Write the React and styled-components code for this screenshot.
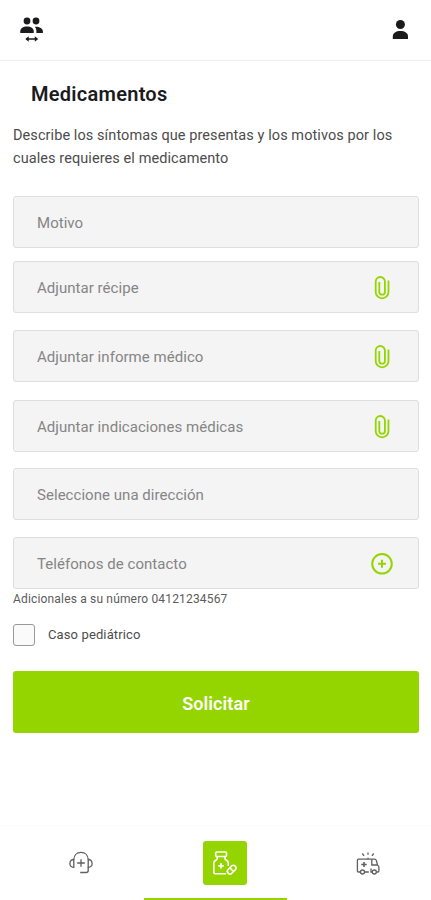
import React, { useState } from 'react';
import styled, { createGlobalStyle } from 'styled-components';

const theme = {
  green: '#94d500',
  black: '#1b1b1d',
  text: '#4c4c4c',
  placeholder: '#858585',
  field: '#f4f4f4',
  border: '#dedede',
  icon: '#606060',
  white: '#ffffff',
};

const GlobalStyle = createGlobalStyle`
  * { box-sizing: border-box; }
  body {
    margin: 0;
    background: ${ theme.white };
    font-family: Roboto, sans-serif;
  }
`;

const Screen = styled.div`
  display: flex;
  flex-direction: column;
  width: 431px;
  height: 900px;
  overflow: hidden;
  background: ${ theme.white };
`;

const TopBar = styled.header`
  display: flex;
  justify-content: space-between;
  align-items: flex-start;
  height: 61px;
  padding: 16px 22px 0 20px;
  border-bottom: 1px solid #f0f0f0;
`;

const IconButton = styled.button`
  display: flex;
  padding: 0;
  border: 0;
  background: none;
`;

const Content = styled.main`
  flex: 1;
  padding: 0 12px 0 13px;
`;

const Title = styled.h1`
  margin: 20px 0 0 18px;
  font-size: 20px;
  font-weight: 600;
  line-height: 26px;
  letter-spacing: 0.27px;
  color: ${ theme.black };
`;

const Description = styled.p`
  width: 400px;
  margin: 18px 0 0;
  font-size: 14.5px;
  line-height: 22.5px;
  letter-spacing: 0.08px;
  color: ${ theme.text };
`;

const Fields = styled.div`
  display: flex;
  flex-direction: column;
  gap: 17px;
  margin-top: 26px;
`;

const Field = styled.div`
  display: flex;
  align-items: center;
  justify-content: space-between;
  height: 52px;
  margin-top: ${ props => props.$offset || 0 }px;
  padding: 1px 25px 0 23px;
  border: 1px solid ${ theme.border };
  border-radius: 3px;
  background: ${ theme.field };
`;

const Label = styled.span`
  font-size: 15px;
  letter-spacing: 0.04px;
  color: ${ theme.placeholder };
`;

const Hint = styled.div`
  margin-top: 1px;
  font-size: 12px;
  line-height: 18px;
  letter-spacing: 0.17px;
  color: #5c5c5c;
`;

const CheckRow = styled.label`
  display: flex;
  align-items: center;
  gap: 13px;
  height: 23px;
  margin-top: 15px;
  font-size: 13px;
  letter-spacing: 0.12px;
  color: ${ theme.text };
`;

const Checkbox = styled.input`
  appearance: none;
  width: 22px;
  height: 22px;
  margin: 0;
  border: 1px solid #999;
  border-radius: 3px;
  background: ${ props => props.checked ? theme.green : '#fafafa' };
`;

const Submit = styled.button`
  display: block;
  width: 100%;
  height: 62px;
  margin-top: 25px;
  padding: 2px 0 0;
  border: 0;
  border-radius: 3px;
  background: ${ theme.green };
  font-family: inherit;
  font-size: 18px;
  font-weight: 600;
  letter-spacing: 0.1px;
  color: ${ theme.white };
`;

const BottomBar = styled.nav`
  display: grid;
  grid-template-columns: repeat(3, 1fr);
  height: 75px;
  border-top: 1px solid #fcfcfc;
`;

const Tab = styled.div`
  display: flex;
  flex-direction: column;
  align-items: center;
  justify-content: space-between;
  padding-top: 15px;
  border-bottom: 2px solid ${ props => props.$active ? theme.green : 'transparent' };
`;

const TabIcon = styled.div`
  display: flex;
  align-items: center;
  justify-content: center;
  width: 44px;
  height: 44px;
  margin-left: ${ props => props.$shift || 0 }px;
  border-radius: 3px;
  background: ${ props => props.$active ? theme.green : 'none' };
`;

const SvgPeople = () => (
  <svg width="24" height="27" viewBox="0 0 24 27" fill={theme.black}>
    <circle cx="7" cy="5" r="3.4" />
    <circle cx="16" cy="5" r="3.4" />
    <path d="M.3 17v-1.7c0-3 2.8-4.8 6.7-4.8s6.7 1.8 6.7 4.8V17z" />
    <path d="M14.8 10.7c4.7-.2 8.1 1.8 8.1 4.6V17h-6.5v-2c0-1.8-.5-3.2-1.6-4.3z" />
    <path d="M6.5 23h10.5" stroke={theme.black} strokeWidth="1.5" />
    <path d="M8.7 20.3 5.3 23l3.4 2.7zM14.8 20.3l3.4 2.7-3.4 2.7z" />
  </svg>
);

const SvgUser = () => (
  <svg width="17" height="25" viewBox="0 0 17 25" fill={theme.black}>
    <circle cx="8.4" cy="8.5" r="4.5" />
    <path d="M.8 23v-2.5c0-3.4 3.3-5.4 7.6-5.4s7.6 2 7.6 5.4V23z" />
  </svg>
);

const SvgClip = () => (
  <svg width="22" height="24" viewBox="0 0 22 24" fill="none" stroke={theme.green} strokeWidth="1.8">
    <path d="M17.5 4.5v11.4a6.4 6.4 0 0 1-12.8 0V5.6a4.6 4.6 0 0 1 9.2 0v10.3a2.8 2.8 0 0 1-5.6 0V6" />
  </svg>
);

const SvgAdd = () => (
  <svg width="22" height="22" viewBox="0 0 22 22" fill="none" stroke={theme.green} strokeWidth="2">
    <circle cx="11" cy="10.8" r="9.8" />
    <path d="M11 6.8v8M7 10.8h8" />
  </svg>
);

const SvgHeadset = () => (
  <svg width="26" height="26" viewBox="0 0 26 26" fill="none" stroke={theme.icon} strokeWidth="1.3">
    <path d="M5.8 9.5C6 5.3 8.8 2.4 13 2.4s7 2.9 7.2 7.1" />
    <path d="M5.8 9.5v7.8c-2.2.2-3.9-1.4-3.9-3.9s1.7-4.1 3.9-3.9zM20.2 9.5v7.8c2.2.2 3.9-1.4 3.9-3.9s-1.7-4.1-3.9-3.9z" />
    <path d="M20.2 17.3v3.2c0 1.3-.7 2-2 2h-6" />
    <path d="M13 9.2v7.6M9.2 13h7.6" />
  </svg>
);

const SvgMedicine = () => (
  <svg width="28" height="28" viewBox="0 0 28 28" fill="none" stroke={theme.white} strokeWidth="1.6">
    <rect x="4.7" y="3" width="10.8" height="4.5" rx="1" />
    <path d="M6.2 7.7v2.1c0 1.4-3.4 1.7-3.4 4.1v9.4c0 .9.5 1.4 1.4 1.4H15M14 7.7v2.1c0 1.4 3.3 1.7 3.3 4.1v3.2" />
    <path d="M10 14.2v5.4M7.3 16.9h5.4" strokeWidth="1.8" />
    <g transform="rotate(-45 20.7 20.7)">
      <rect x="15.7" y="18.1" width="10" height="5.2" rx="2.6" />
      <path d="M20.7 18.1v5.2" />
    </g>
  </svg>
);

const SvgAmbulance = () => (
  <svg width="26" height="26" viewBox="0 0 26 26" fill="none" stroke={theme.icon} strokeWidth="1.3">
    <path d="M5.2 22H3.4c-.6 0-1-.4-1-1V10.3c0-.7.4-1.1 1-1.1h16c1.2 0 1.8.6 2.1 1.7l1 4.1c.9.6 1.4 1.2 1.4 2.3V21c0 .6-.4 1-1 1h-1.6M9.8 22h4M17.2 22H16v-3.6" />
    <path d="M22.5 15h-5.7V9.2M13 9.2V7.7" />
    <circle cx="7.5" cy="22" r="2" />
    <circle cx="19.3" cy="22" r="2" />
    <path d="M9 12v5M6.3 14.5h5.4" strokeWidth="1.6" />
    <path d="M13 2.5v2.2M7.3 3.5l1.7 2.3M18.7 3.5L17 5.8" />
  </svg>
);

const fields = [
  { label: 'Motivo' },
  { label: 'Adjuntar récipe', icon: <SvgClip />, offset: -4 },
  { label: 'Adjuntar informe médico', icon: <SvgClip /> },
  { label: 'Adjuntar indicaciones médicas', icon: <SvgClip />, offset: 1 },
  { label: 'Seleccione una dirección', offset: -1 },
  { label: 'Teléfonos de contacto', icon: <SvgAdd /> },
];

const App = () => {
  const [pediatric, setPediatric] = useState(false);

  return (
    <Screen>
      <GlobalStyle />
      <TopBar>
        <IconButton><SvgPeople /></IconButton>
        <IconButton><SvgUser /></IconButton>
      </TopBar>
      <Content>
        <Title>Medicamentos</Title>
        <Description>
          Describe los síntomas que presentas y los motivos por los cuales requieres el medicamento
        </Description>
        <Fields>
          {fields.map(field => (
            <Field key={field.label} $offset={field.offset}>
              <Label>{field.label}</Label>
              {field.icon}
            </Field>
          ))}
        </Fields>
        <Hint>Adicionales a su número 04121234567</Hint>
        <CheckRow>
          <Checkbox type="checkbox" checked={pediatric} onChange={e => setPediatric(e.target.checked)} />
          Caso pediátrico
        </CheckRow>
        <Submit>Solicitar</Submit>
      </Content>
      <BottomBar>
        <Tab><TabIcon $shift={18}><SvgHeadset /></TabIcon></Tab>
        <Tab $active><TabIcon $active $shift={19}><SvgMedicine /></TabIcon></Tab>
        <Tab><TabIcon $shift={18}><SvgAmbulance /></TabIcon></Tab>
      </BottomBar>
    </Screen>
  );
};

export default App;
